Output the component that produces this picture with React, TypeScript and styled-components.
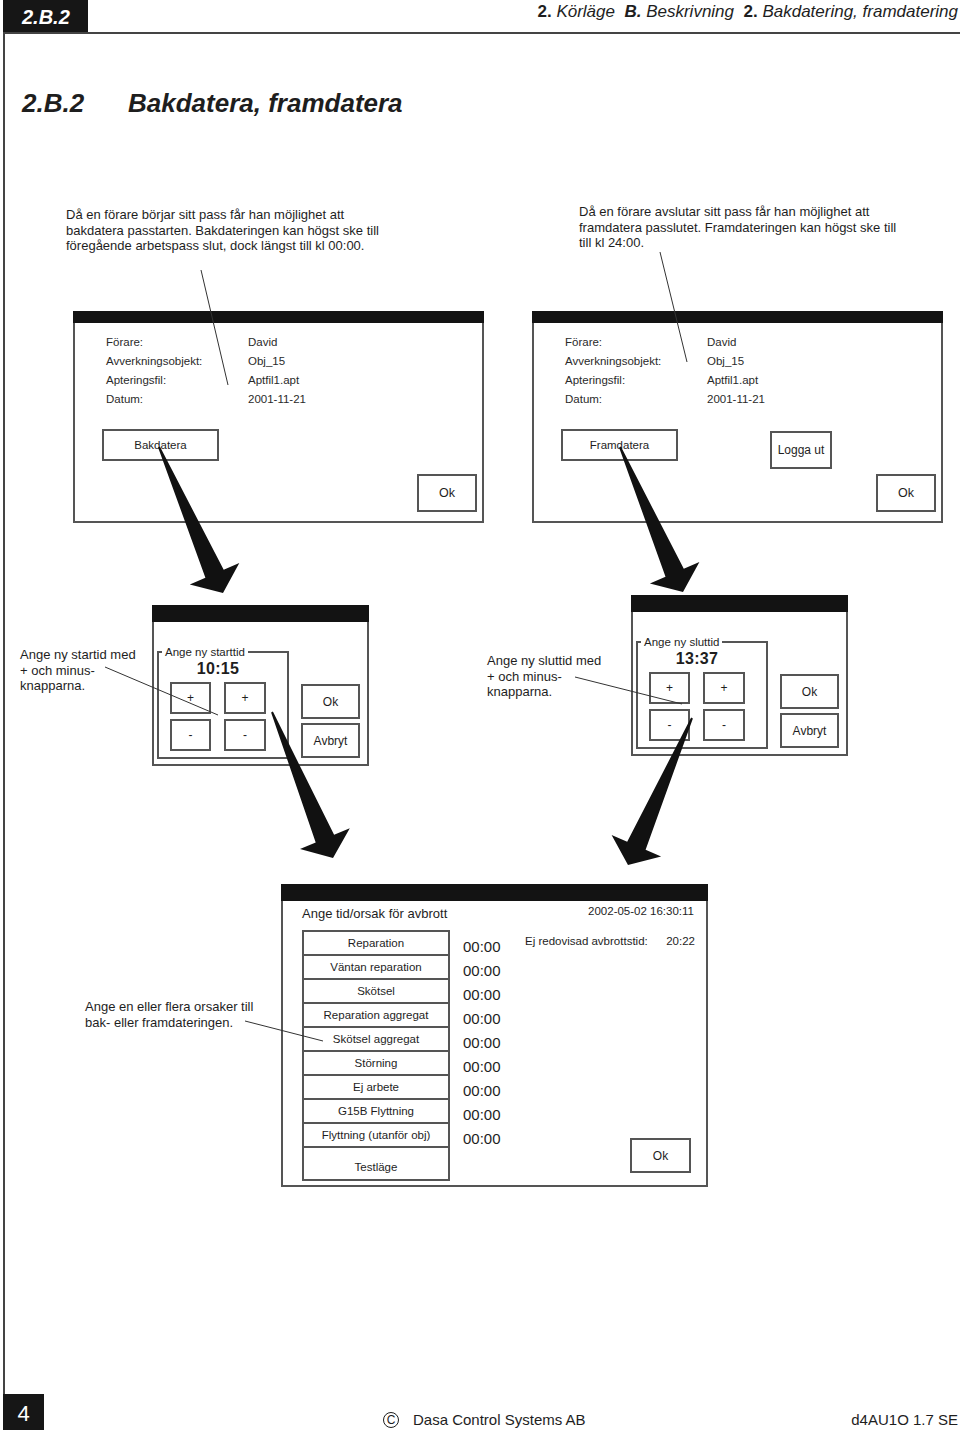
import React from 'react';
import styled, { createGlobalStyle } from 'styled-components';

const GlobalStyle = createGlobalStyle`
  html, body {
    margin: 0;
    padding: 0;
    background: #fff;
  }
  * {
    box-sizing: border-box;
  }
`;

const Page = styled.div`
  position: relative;
  width: 960px;
  height: 1430px;
  display: flex;
  flex-direction: column;
  font-family: "Liberation Sans", Arial, sans-serif;
  color: #1e1e1e;
  background: #fff;
  overflow: hidden;
`;

/* ---------- page header ---------- */

const Header = styled.header`
  display: flex;
  height: 32px;
  flex-shrink: 0;
`;

const SectionTab = styled.div`
  width: 85px;
  margin-left: 3px;
  background: #161616;
  color: #fff;
  font-size: 20px;
  font-weight: bold;
  font-style: italic;
  display: flex;
  align-items: center;
  padding: 2px 0 0 19px;
`;

const Crumbs = styled.div`
  flex: 1;
  text-align: right;
  padding: 2px 2px 0 0;
  font-size: 17px;
  line-height: 20px;
  white-space: pre;
`;

const CrumbNum = styled.b`
  font-weight: bold;
`;

const CrumbText = styled.i`
  font-style: italic;
`;

/* ---------- framed body ---------- */

const Frame = styled.main`
  flex: 1;
  margin-left: 3px;
  border-left: 2px solid #444;
  border-top: 2px solid #444;
  display: flex;
  flex-direction: column;
`;

const PageTitle = styled.h1`
  display: flex;
  margin: 53px 0 0 17px;
  font-size: 26px;
  line-height: 32px;
  font-weight: bold;
  font-style: italic;
`;

const TitleNumber = styled.span`
  width: 106px;
`;

const Intro = styled.section`
  display: grid;
  grid-template-columns: 513px 1fr;
  margin-top: 88px;
  padding-left: 61px;
`;

const IntroText = styled.p<{ $shift?: number }>`
  margin: ${(p) => -(p.$shift ?? 0)}px 0 0;
  font-size: 13px;
  line-height: 15.5px;
`;

/* ---------- generic window ---------- */

const Window = styled.div<{ $w: number; $h: number }>`
  width: ${(p) => p.$w}px;
  height: ${(p) => p.$h}px;
  flex-shrink: 0;
  border: 2px solid #555;
  background: #fff;
  display: flex;
  flex-direction: column;
`;

const TitleBar = styled.div<{ $h: number }>`
  height: ${(p) => p.$h}px;
  margin: -2px -2px 0;
  flex-shrink: 0;
  background: #131313;
`;

const Button = styled.button<{ $w: number; $h: number; $size?: number }>`
  appearance: none;
  width: ${(p) => p.$w}px;
  height: ${(p) => p.$h}px;
  flex-shrink: 0;
  padding: 0;
  border: 2px solid #555;
  border-radius: 0;
  background: #fff;
  color: #1e1e1e;
  font-family: inherit;
  font-size: ${(p) => p.$size ?? 11.5}px;
  display: flex;
  align-items: center;
  justify-content: center;
`;

/* ---------- login dialogs ---------- */

const DialogRow = styled.div`
  display: flex;
  gap: 48px;
  padding-left: 68px;
  margin-top: 57.5px;
`;

const InfoGrid = styled.dl`
  display: grid;
  grid-template-columns: 142px 1fr;
  grid-auto-rows: 19px;
  margin: 0;
  padding: 9.5px 0 0 31px;
  font-size: 11.5px;
  line-height: 19px;
  color: #2a2a2a;
`;

const InfoTerm = styled.dt`
  margin: 0;
`;

const InfoValue = styled.dd`
  margin: 0;
`;

const ButtonRow = styled.div`
  display: flex;
  align-items: flex-start;
  height: 32px;
  margin-top: 20.5px;
  padding-left: 27px;
`;

const LogoutButton = styled(Button)`
  margin: 2px 0 0 92px;
`;

const OkRow = styled.div`
  display: flex;
  justify-content: flex-end;
  margin-top: 13px;
  padding-right: 5px;
`;

/* ---------- time dialogs ---------- */

const TimeRow = styled.div`
  display: flex;
  align-items: flex-start;
  margin-top: 72px;
  padding-left: 15px;
`;

const TimeGroup = styled.div<{ $top?: number; $left?: number }>`
  display: flex;
  align-items: flex-start;
  margin-top: ${(p) => p.$top ?? 0}px;
  margin-left: ${(p) => p.$left ?? 0}px;
`;

const Note = styled.p<{ $w: number; $top: number }>`
  width: ${(p) => p.$w}px;
  flex-shrink: 0;
  margin: ${(p) => p.$top}px 0 0;
  font-size: 13px;
  line-height: 15.5px;
`;

const TimeBody = styled.div`
  display: flex;
  align-items: flex-start;
`;

const Stepper = styled.fieldset`
  width: 132px;
  margin: 23.5px 0 0 3px;
  padding: 0 0 6px;
  border: 2px solid #555;
  min-width: 0;
`;

const StepperLegend = styled.legend`
  margin-left: 3px;
  padding: 0 3px;
  font-size: 11.5px;
  line-height: 13px;
`;

const StepperInner = styled.div`
  padding-left: 11px;
`;

const TimeValue = styled.div`
  width: 96px;
  margin-top: 1.5px;
  text-align: center;
  font-size: 16px;
  font-weight: bold;
  line-height: 18px;
  letter-spacing: 0.3px;
`;

const StepGrid = styled.div`
  display: grid;
  grid-template-columns: 41px 42px;
  grid-auto-rows: 32px;
  column-gap: 13px;
  row-gap: 5px;
  margin-top: 4px;
`;

const ActionCol = styled.div`
  display: flex;
  flex-direction: column;
  gap: 4px;
  margin: 62px 0 0 12px;
`;

/* ---------- interruption dialog ---------- */

const BottomRow = styled.div`
  display: flex;
  align-items: flex-start;
  margin-top: 118px;
  padding-left: 80px;
`;

const DialogHeader = styled.div`
  display: flex;
  justify-content: space-between;
  align-items: flex-start;
  padding: 5px 12px 0 19px;
`;

const DialogTitle = styled.div`
  font-size: 13px;
  line-height: 16px;
`;

const Stamp = styled.div`
  margin-top: -1px;
  font-size: 11.5px;
  line-height: 12px;
`;

const DialogBody = styled.div`
  display: flex;
  margin-top: 8px;
  padding: 0 11px 0 19px;
`;

const ReasonList = styled.ul`
  width: 148px;
  height: 251px;
  flex-shrink: 0;
  margin: 0;
  padding: 0;
  list-style: none;
  border: 2px solid #555;
  display: flex;
  flex-direction: column;
`;

const Reason = styled.li<{ $last?: boolean }>`
  height: ${(p) => (p.$last ? 31 : 24)}px;
  flex-shrink: 0;
  border-bottom: ${(p) => (p.$last ? 'none' : '2px solid #555')};
  display: flex;
  align-items: center;
  justify-content: center;
  padding-top: ${(p) => (p.$last ? 6 : 0)}px;
  font-size: 11.5px;
`;

const TimeCol = styled.div`
  width: 50px;
  margin: 5px 0 0 13px;
  display: flex;
  flex-direction: column;
  font-size: 15px;
  line-height: 24px;
`;

const SideCol = styled.div`
  flex: 1;
  margin-left: 12px;
  display: flex;
  flex-direction: column;
`;

const SideLine = styled.div`
  display: flex;
  justify-content: space-between;
  margin-top: 4px;
  font-size: 11.5px;
  line-height: 14px;
`;

const SideOk = styled(Button)`
  align-self: flex-end;
  margin: auto 4px 8px 0;
`;

/* ---------- footer ---------- */

const Footer = styled.footer`
  display: flex;
  align-items: flex-end;
  height: 36px;
  flex-shrink: 0;
  padding-bottom: 1px;
  font-size: 15px;
  line-height: 18px;
`;

const PageNumber = styled.div`
  align-self: stretch;
  width: 41px;
  margin: 0 0 -1px 3px;
  background: #161616;
  color: #fff;
  font-size: 22px;
  display: flex;
  align-items: center;
  justify-content: center;
  padding-top: 4px;
`;

const Copyright = styled.div`
  display: flex;
  align-items: center;
  gap: 14px;
  margin-left: 339px;
`;

const CircleC = styled.span`
  width: 16px;
  height: 16px;
  border: 1px solid #1e1e1e;
  border-radius: 50%;
  display: flex;
  align-items: center;
  justify-content: center;
  font-size: 12px;
  line-height: 1;
`;

const DocCode = styled.div`
  margin-left: auto;
  padding-right: 2px;
`;

/* ---------- callout drawing (lines + arrows over the content) ---------- */

const Overlay = styled.svg`
  position: absolute;
  top: 0;
  left: 0;
  pointer-events: none;
`;

type Pt = [number, number];

const arrowPath = (s: Pt, t: Pt, w0 = 2, w1 = 20, hw = 54, hl = 21) => {
  const dx = t[0] - s[0];
  const dy = t[1] - s[1];
  const len = Math.hypot(dx, dy);
  const ux = dx / len;
  const uy = dy / len;
  const nx = -uy;
  const ny = ux;
  const bx = t[0] - ux * hl;
  const by = t[1] - uy * hl;
  const pts: Pt[] = [
    [s[0] + (nx * w0) / 2, s[1] + (ny * w0) / 2],
    [bx + (nx * w1) / 2, by + (ny * w1) / 2],
    [bx + (nx * hw) / 2, by + (ny * hw) / 2],
    t,
    [bx - (nx * hw) / 2, by - (ny * hw) / 2],
    [bx - (nx * w1) / 2, by - (ny * w1) / 2],
    [s[0] - (nx * w0) / 2, s[1] - (ny * w0) / 2],
  ];
  return pts.map((p) => `${p[0].toFixed(1)},${p[1].toFixed(1)}`).join(' ');
};

const leaders: [Pt, Pt][] = [
  [[201, 270], [228, 385]],
  [[660, 252], [687, 362]],
  [[105, 667], [218, 715]],
  [[575, 677], [682, 704]],
  [[245, 1021], [323, 1041]],
];

const arrows: [Pt, Pt][] = [
  [[159, 447], [223, 593]],
  [[620, 447], [683, 592]],
  [[272, 712], [333, 858]],
  [[692, 718], [628, 865]],
];

const Callouts = () => (
  <Overlay width={960} height={1430} viewBox="0 0 960 1430">
    {leaders.map(([a, b], i) => (
      <line key={i} x1={a[0]} y1={a[1]} x2={b[0]} y2={b[1]} stroke="#333" strokeWidth={1} />
    ))}
    {arrows.map(([a, b], i) => (
      <polygon key={i} points={arrowPath(a, b)} fill="#111" />
    ))}
  </Overlay>
);

/* ---------- data ---------- */

const info = [
  ['Förare:', 'David'],
  ['Avverkningsobjekt:', 'Obj_15'],
  ['Apteringsfil:', 'Aptfil1.apt'],
  ['Datum:', '2001-11-21'],
];

const reasons = [
  'Reparation',
  'Väntan reparation',
  'Skötsel',
  'Reparation aggregat',
  'Skötsel aggregat',
  'Störning',
  'Ej arbete',
  'G15B Flyttning',
  'Flyttning (utanför obj)',
  'Testläge',
];

/* ---------- pieces ---------- */

const LoginDialog = ({ action, logout }: { action: string; logout?: boolean }) => (
  <Window $w={411} $h={212}>
    <TitleBar $h={12} />
    <InfoGrid>
      {info.map(([k, v]) => (
        <React.Fragment key={k}>
          <InfoTerm>{k}</InfoTerm>
          <InfoValue>{v}</InfoValue>
        </React.Fragment>
      ))}
    </InfoGrid>
    <ButtonRow>
      <Button $w={117} $h={32}>{action}</Button>
      {logout && <LogoutButton $w={62} $h={38} $size={12}>Logga ut</LogoutButton>}
    </ButtonRow>
    <OkRow>
      <Button $w={60} $h={38} $size={12.5}>Ok</Button>
    </OkRow>
  </Window>
);

const TimeDialog = ({ legend, value }: { legend: string; value: string }) => (
  <Window $w={217} $h={161}>
    <TitleBar $h={17} />
    <TimeBody>
      <Stepper>
        <StepperLegend>{legend}</StepperLegend>
        <StepperInner>
          <TimeValue>{value}</TimeValue>
          <StepGrid>
            <Button $w={41} $h={32} $size={12}>+</Button>
            <Button $w={42} $h={32} $size={12}>+</Button>
            <Button $w={41} $h={32} $size={12}>-</Button>
            <Button $w={42} $h={32} $size={12}>-</Button>
          </StepGrid>
        </StepperInner>
      </Stepper>
      <ActionCol>
        <Button $w={59} $h={35} $size={12}>Ok</Button>
        <Button $w={59} $h={35} $size={12}>Avbryt</Button>
      </ActionCol>
    </TimeBody>
  </Window>
);

export default function App() {
  return (
    <Page>
      <GlobalStyle />
      <Header>
        <SectionTab>2.B.2</SectionTab>
        <Crumbs>
          <CrumbNum>2.</CrumbNum>
          <CrumbText> Körläge  </CrumbText>
          <CrumbNum><CrumbText>B.</CrumbText></CrumbNum>
          <CrumbText> Beskrivning  </CrumbText>
          <CrumbNum>2.</CrumbNum>
          <CrumbText> Bakdatering, framdatering</CrumbText>
        </Crumbs>
      </Header>

      <Frame>
        <PageTitle>
          <TitleNumber>2.B.2</TitleNumber>
          <span>Bakdatera, framdatera</span>
        </PageTitle>

        <Intro>
          <IntroText>
            Då en förare börjar sitt pass får han möjlighet att
            <br />
            bakdatera passtarten. Bakdateringen kan högst ske till
            <br />
            föregående arbetspass slut, dock längst till kl 00:00.
          </IntroText>
          <IntroText $shift={3}>
            Då en förare avslutar sitt pass får han möjlighet att
            <br />
            framdatera passlutet. Framdateringen kan högst ske till
            <br />
            till kl 24:00.
          </IntroText>
        </Intro>

        <DialogRow>
          <LoginDialog action="Bakdatera" />
          <LoginDialog action="Framdatera" logout />
        </DialogRow>

        <TimeRow>
          <TimeGroup $top={10}>
            <Note $w={132} $top={42}>
              Ange ny startid med
              <br />+ och minus-
              <br />
              knapparna.
            </Note>
            <TimeDialog legend="Ange ny starttid" value="10:15" />
          </TimeGroup>
          <TimeGroup $left={118}>
            <Note $w={144} $top={58}>
              Ange ny sluttid med
              <br />+ och minus-
              <br />
              knapparna.
            </Note>
            <TimeDialog legend="Ange ny sluttid" value="13:37" />
          </TimeGroup>
        </TimeRow>

        <BottomRow>
          <Note $w={196} $top={115}>
            Ange en eller flera orsaker till
            <br />
            bak- eller framdateringen.
          </Note>
          <Window $w={427} $h={303}>
            <TitleBar $h={17} />
            <DialogHeader>
              <DialogTitle>Ange tid/orsak för avbrott</DialogTitle>
              <Stamp>2002-05-02 16:30:11</Stamp>
            </DialogHeader>
            <DialogBody>
              <ReasonList>
                {reasons.map((r, i) => (
                  <Reason key={r} $last={i === reasons.length - 1}>
                    {r}
                  </Reason>
                ))}
              </ReasonList>
              <TimeCol>
                {reasons.slice(0, 9).map((r) => (
                  <span key={r}>00:00</span>
                ))}
              </TimeCol>
              <SideCol>
                <SideLine>
                  <span>Ej redovisad avbrottstid:</span>
                  <span>20:22</span>
                </SideLine>
                <SideOk $w={61} $h={35} $size={12}>Ok</SideOk>
              </SideCol>
            </DialogBody>
          </Window>
        </BottomRow>
      </Frame>

      <Footer>
        <PageNumber>4</PageNumber>
        <Copyright>
          <CircleC>C</CircleC>
          <span>Dasa Control Systems AB</span>
        </Copyright>
        <DocCode>d4AU1O 1.7 SE</DocCode>
      </Footer>

      <Callouts />
    </Page>
  );
}
